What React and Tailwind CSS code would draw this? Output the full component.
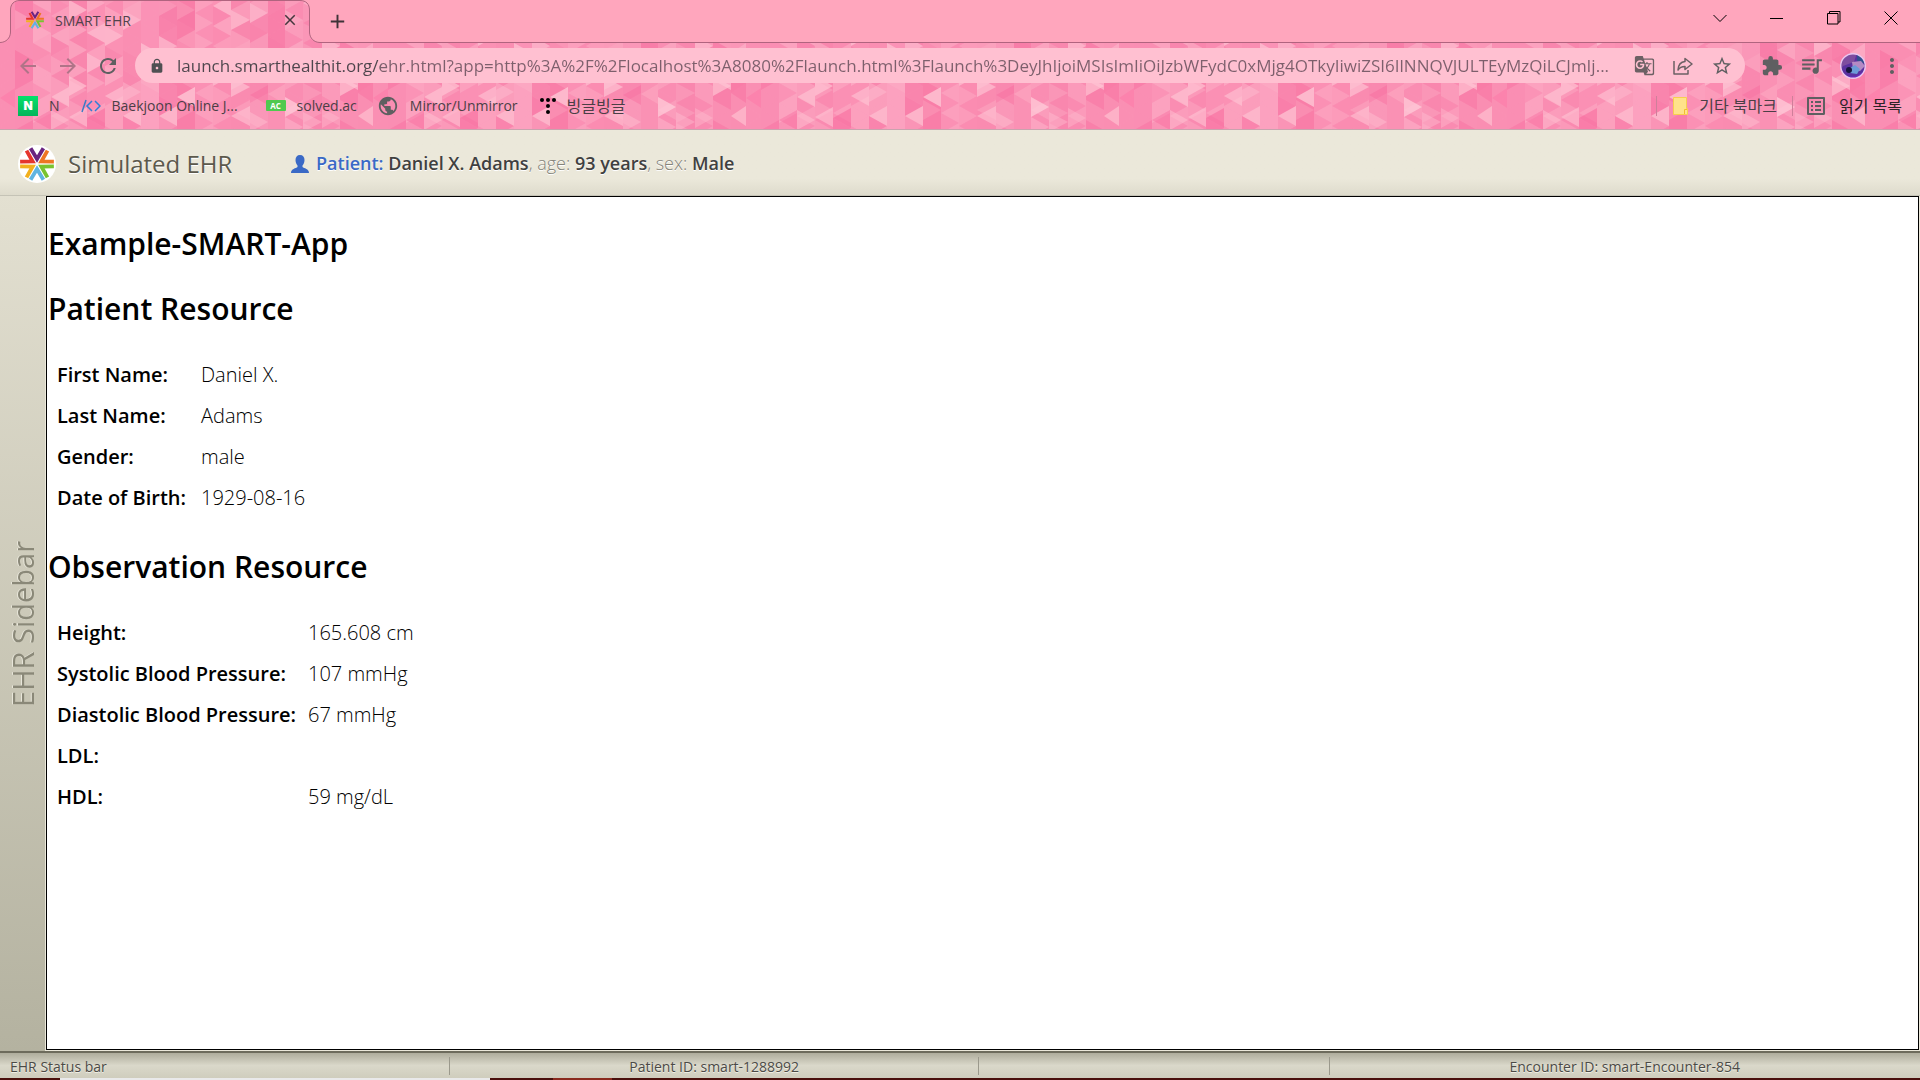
import {
  MdArrowBack, MdArrowForward, MdRefresh, MdLock, MdGTranslate, MdStarBorder,
  MdExtension, MdQueueMusic, MdMoreVert, MdPublic, MdAdd, MdClose, MdOutlineListAlt,
} from "react-icons/md";

const UI_FONT = "font-['Open_Sans','Noto_Sans_CJK_KR',sans-serif]";

/* Left edge of each column of the theme texture; the tile is 373 wide. */
const COLUMNS = [0, 18, 37, 55, 73, 88, 103, 121, 139, 157, 175, 193, 211, 229, 247, 265, 283, 301, 319, 338, 356, 373];
const BASE = ["#fa94b6", "#f98db1", "#fa92b4", "#f985ac", "#f983ab", "#f985ac", "#f984ac", "#fb9bba", "#fa94b6", "#fa90b3", "#fb97b8", "#fb98b8", "#fa95b6", "#fb9aba", "#f98bb0", "#f982aa", "#fb97b8", "#fb93b5", "#fa91b3", "#f98eb2", "#f987ad"];
/* column, top, direction (1 right, -1 left), shade, opacity */
const ACCENTS = [
  [0, 97, 1, "#ffd0dc", 0.7], [0, 117, 1, "#ffc4d4", 0.4], [1, 112, 1, "#ffc4d4", 0.4], [2, 108, 1, "#ffc4d4", 0.35],
  [3, 76, 1, "#ffc8d6", 0.65], [4, 106, -1, "#ffc8d6", 0.6], [5, 88, -1, "#ff6d9f", 0.35], [7, 110, -1, "#f8669b", 0.4],
  [8, 87, -1, "#ffc8d6", 0.6], [8, 110, 1, "#ffc8d6", 0.45], [9, 76, 1, "#ffc8d6", 0.65], [9, 107, -1, "#ffc8d6", 0.55],
  [10, 108, -1, "#f8669b", 0.55], [10, 118, 1, "#f8669b", 0.45], [11, 86, -1, "#ffd0dc", 0.5], [12, 82, 1, "#ffc8d6", 0.35],
  [12, 106, -1, "#ffc8d6", 0.55], [12, 116, 1, "#f8669b", 0.45], [14, 96, 1, "#f8669b", 0.45], [14, 106, -1, "#ffc8d6", 0.6],
  [15, 87, -1, "#ffd0dc", 0.7], [18, 77, 1, "#ffd0dc", 0.55], [18, 106, -1, "#ffc8d6", 0.55], [19, 85, -1, "#f8669b", 0.4],
  [19, 112, 1, "#ffc8d6", 0.4], [20, 84, -1, "#ffb4c9", 0.4],
];

const triangle = (col, top, dir) => {
  const a = COLUMNS[col];
  const b = COLUMNS[col + 1];
  return dir > 0 ? `M${a} ${top}L${b} ${top + 10}L${a} ${top + 20}Z` : `M${b} ${top}L${a} ${top + 10}L${b} ${top + 20}Z`;
};

function Texture() {
  const facets = [];
  for (let c = 0; c < 21; c++) {
    for (let r = -1; r < 13; r++) {
      const n = (c * 37 + r * 53 + c * r * 17 + 400) % 23;
      const dir = (c + r) % 2 ? 1 : -1;
      const top = r * 10 + (c % 3) * 3;
      const lower = top > 74;
      const light = n % 2 === 0;
      const opacity = lower ? 0.14 : n > 18 ? (light ? 0.5 : 0.3) : n > 12 ? 0.25 : 0.14;
      facets.push(<path key={`${c}-${r}`} d={triangle(c, top, dir)} fill={light ? "#ffd0dc" : "#f8669b"} opacity={opacity} />);
    }
  }
  return (
    <svg className="absolute inset-0 h-full w-full" aria-hidden="true">
      <defs>
        <pattern id="facets" x="285" y="0" width="373" height="130" patternUnits="userSpaceOnUse">
          {BASE.map((fill, i) => <rect key={i} x={COLUMNS[i]} y="0" width={COLUMNS[i + 1] - COLUMNS[i]} height="130" fill={fill} />)}
          {facets}
          {ACCENTS.map(([c, top, dir, fill, o], i) => <path key={i} d={triangle(c, top, dir)} fill={fill} opacity={o} />)}
        </pattern>
      </defs>
      <rect width="100%" height="100%" fill="url(#facets)" />
    </svg>
  );
}

function SmartLogo({ className, disc }) {
  const arms = [["#6a2480", 0], ["#ee7623", 60], ["#7ac32f", 120], ["#5fb4e0", 180], ["#f2b01e", 240], ["#e5352d", 300]];
  return (
    <svg viewBox="-19 -19 38 38" className={className} aria-hidden="true">
      {disc && <circle r="19" fill="#fff" />}
      {arms.map(([color, angle]) => (
        <path key={angle} d="M-6.4 -15.800L0 -5L6.4 -15.800" fill="none" stroke={color} strokeWidth="3.800" transform={`rotate(${angle})`} />
      ))}
    </svg>
  );
}

function TabStrip() {
  return (
    <div className="relative flex h-[43px]">
      <svg viewBox="0 0 20 43" className="h-[43px] w-5 shrink-0" aria-hidden="true">
        <path d="M0 0H20V1C14 1 10.500 4 10.500 10V32C10.500 38 6 42.500 0 42.500Z" fill="#ffa6bd" />
        <path d="M20 .5C14 .5 10.500 4 10.500 10V32C10.500 38 6 42.500 0 42.500" fill="none" stroke="#b0647f" />
      </svg>
      <div className="flex h-[43px] w-[280px] shrink-0 items-center border-t border-[#b0647f] pb-1 pl-[5px] pr-px">
        <SmartLogo className="size-5" />
        <span className="ml-[10px] flex-1 text-[14px] text-[#52424b]">SMART EHR</span>
        <button aria-label="Close tab" className="text-[#45363d]"><MdClose size={18} /></button>
      </div>
      <svg viewBox="0 0 20 43" className="h-[43px] w-5 shrink-0" aria-hidden="true">
        <path d="M20 0H0V1C6 1 9.500 4 9.500 10V32C9.500 38 14 42.500 20 42.500Z" fill="#ffa6bd" />
        <path d="M0 .5C6 .5 9.500 4 9.500 10V32C9.500 38 14 42.500 20 42.500" fill="none" stroke="#b0647f" />
      </svg>
      <div className="flex flex-1 items-center justify-between border-b border-[#b0647f] bg-[#ffa6bd]">
        <button aria-label="New tab" className="ml-[6px] text-[#3f3338]"><MdAdd size={23} /></button>
        <div className="flex pr-px pb-[6px] text-black">
          <button aria-label="Search tabs" className="grid w-[57px] place-items-center">
            <svg width="14" height="14" viewBox="0 0 14 14" fill="none" stroke="currentColor"><path d="M.5 4L7 10.500L13.500 4" /></svg>
          </button>
          <button aria-label="Minimize" className="grid w-[57px] place-items-center">
            <svg width="14" height="14" viewBox="0 0 14 14" fill="none" stroke="currentColor"><path d="M0 7.500H13" /></svg>
          </button>
          <button aria-label="Restore" className="grid w-[57px] place-items-center">
            <svg width="14" height="14" viewBox="0 0 14 14" fill="none" stroke="currentColor"><path d="M.5 2.500H11V13H.5ZM2.500 2.500V.5H13V11H11" /></svg>
          </button>
          <button aria-label="Close window" className="grid w-[57px] place-items-center">
            <svg width="14" height="14" viewBox="0 0 14 14" fill="none" stroke="currentColor"><path d="M.5 .5L13.500 13.500M13.500 .5L.5 13.500" /></svg>
          </button>
        </div>
      </div>
    </div>
  );
}

function Toolbar() {
  return (
    <div className="relative flex h-[45px] items-center pr-4 text-[#5f5f61]">
      <button aria-label="Back" className="ml-4 text-[#b07488]"><MdArrowBack size={24} /></button>
      <button aria-label="Forward" className="ml-4 text-[#b07488]"><MdArrowForward size={24} /></button>
      <button aria-label="Reload" className="ml-4"><MdRefresh size={24} /></button>
      <div className="ml-[15px] flex h-[35px] flex-1 items-center rounded-full bg-[#ffc0d1] pl-[14px] pr-3">
        <MdLock size={16} className="shrink-0 text-[#4f4f52]" />
        <input
          aria-label="Address"
          className="ml-3 min-w-0 flex-1 bg-linear-to-r from-[#4d454c] from-14% to-[#7d5f6c] to-14% bg-clip-text text-[17px] text-transparent outline-none"
          defaultValue="launch.smarthealthit.org/ehr.html?app=http%3A%2F%2Flocalhost%3A8080%2Flaunch.html%3Flaunch%3DeyJhIjoiMSIsImIiOiJzbWFydC0xMjg4OTkyIiwiZSI6IlNNQVJULTEyMzQiLCJmIj..."
        />
        <div className="flex items-center gap-[18px] pl-2">
          <button aria-label="Translate" className="text-[#6c6064]"><MdGTranslate size={21} /></button>
          <button aria-label="Share" className="text-[#6c6064]">
            <svg width="20" height="18" viewBox="0 0 20 18" fill="none" stroke="currentColor" strokeWidth="1.500" strokeLinejoin="round">
              <path d="M1 4V17H15V13" />
              <path d="M12 1.500L19 7L12 12.500V9.500C8.500 9.500 6.500 10.500 5 13C5.300 8.500 7.500 5 12 4.600Z" />
            </svg>
          </button>
          <button aria-label="Bookmark this page"><MdStarBorder size={22} /></button>
        </div>
      </div>
      <div className="ml-4 flex items-center gap-4">
        <button aria-label="Extensions"><MdExtension size={22} /></button>
        <button aria-label="Media controls"><MdQueueMusic size={25} /></button>
        <button aria-label="Profile">
          <svg width="26" height="26" viewBox="0 0 26 26">
            <defs><clipPath id="avatar"><circle cx="13" cy="13" r="12" /></clipPath></defs>
            <g clipPath="url(#avatar)">
              <rect width="26" height="26" fill="#5b31a0" />
              <path d="M0 0H17L14 9L3 13L0 18Z" fill="#7e4d9f" />
              <path d="M17 0H26V11L17 8Z" fill="#31508e" />
              <path d="M12 9L21 8L25 13L20 18L13 16Z" fill="#b48ac4" />
              <path d="M8 16L15 12L20 16L17 21L10 20Z" fill="#6b9bd8" />
              <circle cx="9" cy="17" r="3" fill="#16153d" />
              <path d="M2 20Q13 28 24 18V26H2Z" fill="#6b2bc0" />
            </g>
            <circle cx="13" cy="13" r="12.300" fill="none" stroke="#e9c7f0" strokeWidth="1.400" />
          </svg>
        </button>
        <button aria-label="Menu" className="-ml-0.5"><MdMoreVert size={24} /></button>
      </div>
    </div>
  );
}

function Bookmark({ icon, children, className = "" }) {
  return (
    <a href="#" className={`flex items-center gap-[11px] ${className}`}>
      {icon}
      <span>{children}</span>
    </a>
  );
}

function BookmarksBar() {
  const dots = [[2, 2], [8, 2], [14, 2], [8, 8], [8, 14]];
  return (
    <nav aria-label="Bookmarks" className="relative flex h-[42px] items-center border-b border-[#c9a3ae] pr-[18px] pb-[6px] pl-[18px] text-[14px] text-[#4b3f46]">
      <Bookmark icon={<span className="block size-5 bg-linear-to-b from-[#05e16a] to-[#04b45b] text-center font-['Inter',sans-serif] text-[12px] leading-5 font-black text-white">N</span>}>N</Bookmark>
      <Bookmark className="ml-[21px]" icon={
        <svg width="20" height="14" viewBox="0 0 20 14" fill="none" strokeWidth="1.500" aria-hidden="true">
          <path d="M5 1L1 13" stroke="#3b7cc4" /><path d="M11 2L6 7L11 12M14 2L19 7L14 12" stroke="#2f7fd6" />
        </svg>}>Baekjoon Online J...</Bookmark>
      <Bookmark className="ml-7" icon={<span className="grid h-[11px] w-5 place-items-center rounded-[1px] bg-[#4fc94f] text-[8px] leading-none font-bold text-white">AC</span>}>solved.ac</Bookmark>
      <Bookmark className="ml-5" icon={<MdPublic size={22} className="text-[#5f5f61]" />}>Mirror/Unmirror</Bookmark>
      <Bookmark className="ml-[22px] text-[16px]" icon={
        <svg width="16" height="16" viewBox="0 0 16 16" aria-hidden="true">
          {dots.map(([x, y]) => <circle key={`${x}-${y}`} cx={x} cy={y} r="2" fill="#000" />)}
        </svg>}>빙글빙글</Bookmark>
      <div className="ml-auto flex items-center text-[16px]">
        <span className="h-5 w-px bg-[#cf7f9a]" />
        <Bookmark className="ml-4" icon={
          <svg width="15" height="18" viewBox="0 0 15 18" aria-hidden="true">
            <path d="M.5 .5H13.500V11.500H14.500V17.500H.5Z" fill="#ffe28a" stroke="#f7cf4e" /><path d="M11.500 17V12.500H14" fill="none" stroke="#f3bd2f" />
          </svg>}>기타 북마크</Bookmark>
        <span className="ml-[15px] h-5 w-px bg-[#cf7f9a]" />
        <Bookmark className="ml-[11px] text-[#2c2327]" icon={<MdOutlineListAlt size={24} className="text-[#5f5f61]" />}>읽기 목록</Bookmark>
      </div>
    </nav>
  );
}

function DataTable({ rows, labelWidth, rowHeight }) {
  return (
    <table className="ml-[9px] text-[20px]">
      <tbody>
        {rows.map(([label, value]) => (
          <tr key={label} className={rowHeight}>
            <th scope="row" className={`text-left font-semibold ${labelWidth}`}>{label}</th>
            <td className="font-light">{value}</td>
          </tr>
        ))}
      </tbody>
    </table>
  );
}

const heading = "text-[30px] leading-[40px] font-semibold";

export default function App() {
  return (
    <div className={`flex h-screen flex-col overflow-hidden bg-[#ebe8da] ${UI_FONT}`}>
      <header className="relative shrink-0">
        <Texture />
        <TabStrip />
        <Toolbar />
        <BookmarksBar />
      </header>

      <div className="flex h-[66px] shrink-0 items-center border-b border-[#c5c3b6] bg-linear-to-b from-[#ebe8da] from-75% to-[#dedbcc] pt-0.5 pl-[18px] [text-shadow:0_1px_0_#fff]">
        <SmartLogo disc className="size-[38px]" />
        <h1 className="ml-3 w-[223px] text-[24px] text-[#5c594c]">Simulated EHR</h1>
        <svg width="18" height="18" viewBox="0 0 18 18" className="shrink-0" aria-hidden="true">
          <path d="M9 0C12 0 13.500 2 13.500 5C13.500 7.500 12.500 9.500 11.500 10.500V12C13 13.500 18 13.500 18 18H0C0 13.500 5 13.500 6.500 12V10.500C5.500 9.500 4.500 7.500 4.500 5C4.500 2 6 0 9 0Z" fill="#3a69c6" />
        </svg>
        <p className="ml-[7px] text-[18px] font-light text-[#85837a]">
          <b className="font-semibold text-[#3a69c6]">Patient:</b>{" "}
          <b className="font-semibold text-[#404040]">Daniel X. Adams</b>, age: <b className="font-semibold text-[#404040]">93 years</b>, sex: <b className="font-semibold text-[#404040]">Male</b>
        </p>
      </div>

      <div className="flex min-h-0 flex-1">
        <aside className="grid w-[46px] shrink-0 place-items-center border-r border-[#ebe8da] bg-linear-to-b from-[#e3e0d1] to-[#b4b2a0]">
          <span className="rotate-180 text-[29px] leading-[40px] text-[#8a8878] [text-shadow:0_-1px_0_#e8e6da] [writing-mode:vertical-rl]">EHR Sidebar</span>
        </aside>
        <main className="mr-px mb-px flex-1 border border-black bg-white pt-[27px] pl-px text-black">
          <h2 className={heading}>Example-SMART-App</h2>
          <h2 className={`mt-[25px] ${heading}`}>Patient Resource</h2>
          <section className="mt-[25px]">
            <DataTable labelWidth="w-[144px]" rowHeight="h-[41px]" rows={[["First Name:", "Daniel X."], ["Last Name:", "Adams"], ["Gender:", "male"], ["Date of Birth:", "1929-08-16"]]} />
          </section>
          <h2 className={`mt-[29px] ${heading}`}>Observation Resource</h2>
          <section className="mt-[25px]">
            <DataTable labelWidth="w-[251px]" rowHeight="h-[41px]" rows={[["Height:", "165.608 cm"], ["Systolic Blood Pressure:", "107 mmHg"], ["Diastolic Blood Pressure:", "67 mmHg"], ["LDL:", ""], ["HDL:", "59 mg/dL"]]} />
          </section>
        </main>
      </div>

      <footer className="shrink-0">
        <div className="flex h-[27px] items-center border-t-2 border-[#6d6b5c] bg-linear-to-b from-[#aeac9c] via-[#dad8ca] via-50% to-[#cfcdbd] pt-px text-[14px] text-[#4b4a46] [text-shadow:0_1px_0_#f0eee4]">
          <div className="w-[23.4%] pl-[10px]">EHR Status bar</div>
          <div className="flex h-[18px] w-[27.6%] items-center justify-center border-x border-[#9b998c]">Patient ID: smart-1288992</div>
          <div className="w-[18.2%]" />
          <div className="flex h-[18px] flex-1 items-center justify-center border-l border-[#9b998c]">Encounter ID: smart-Encounter-854</div>
        </div>
        <div className="flex h-[2px] bg-[#4a100c]">
          <div className="ml-[3.1%] w-[22.4%] bg-[#e9e9ea]" />
          <div className="ml-[3.3%] w-[3.1%] bg-[#8a2a1e]" />
        </div>
      </footer>
    </div>
  );
}
